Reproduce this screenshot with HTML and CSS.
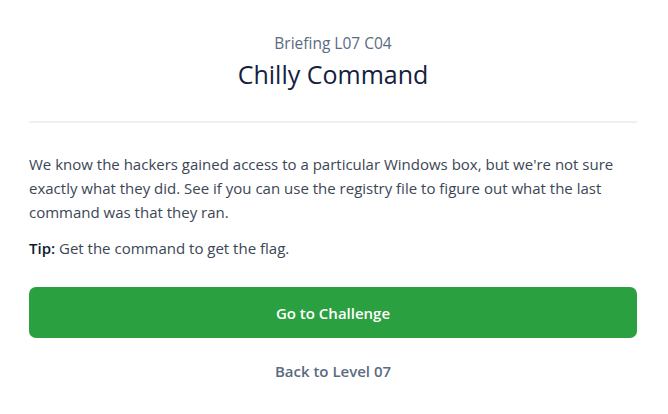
FILE: index.html
```html
<!DOCTYPE html>
<html>
<head>
<meta charset="utf-8">
<link rel="stylesheet" href="styles.css">
</head>
<body>
<main class="page">
  <header class="head">
    <div class="kicker">Briefing L07 C04</div>
    <h1 class="title">Chilly Command</h1>
  </header>
  <hr class="divider">
  <p class="desc">We know the hackers gained access to a particular Windows box, but we're not sure exactly what they did. See if you can use the registry file to figure out what the last command was that they ran.</p>
  <p class="tip"><strong>Tip:</strong> Get the command to get the flag.</p>
  <a class="btn" href="#">Go to Challenge</a>
  <a class="back" href="#">Back to Level 07</a>
</main>
</body>
</html>
```

FILE: styles.css
```css
* { box-sizing: border-box; }
html, body { margin: 0; background: #ffffff; }
body {
  font-family: "Open Sans", "Liberation Sans", sans-serif;
  color: #3b4656;
}
.page {
  padding: 33px 31px 0 29px;
  display: flex;
  flex-direction: column;
}
.head { text-align: center; }
.kicker {
  font-size: 15.5px;
  font-weight: 500;
  color: #5b6b80;
  line-height: 20px;
}
.title {
  margin: 6px 0 0;
  font-size: 25px;
  font-weight: 500;
  color: #14213d;
  line-height: 30px;
}
.divider {
  margin: 32px 0 0;
  border: 0;
  height: 2px;
  background: #edf1f5;
}
.desc {
  margin: 29px 0 0;
  font-size: 15px;
  line-height: 24px;
  color: #3b4656;
}
.tip {
  margin: 12px 0 0;
  font-size: 15px;
  line-height: 24px;
  color: #3b4656;
}
.tip strong { color: #0f1a2e; font-weight: 600; }
.btn {
  margin-top: 27px;
  height: 51px;
  border-radius: 7px;
  background: #2ba040;
  color: #fff;
  font-weight: 600;
  font-size: 15px;
  display: flex;
  align-items: center;
  justify-content: center;
  text-decoration: none;
}
.back {
  margin-top: 21px;
  text-align: center;
  font-size: 15px;
  font-weight: 600;
  color: #5b6b80;
  text-decoration: none;
  line-height: 24px;
}
```
